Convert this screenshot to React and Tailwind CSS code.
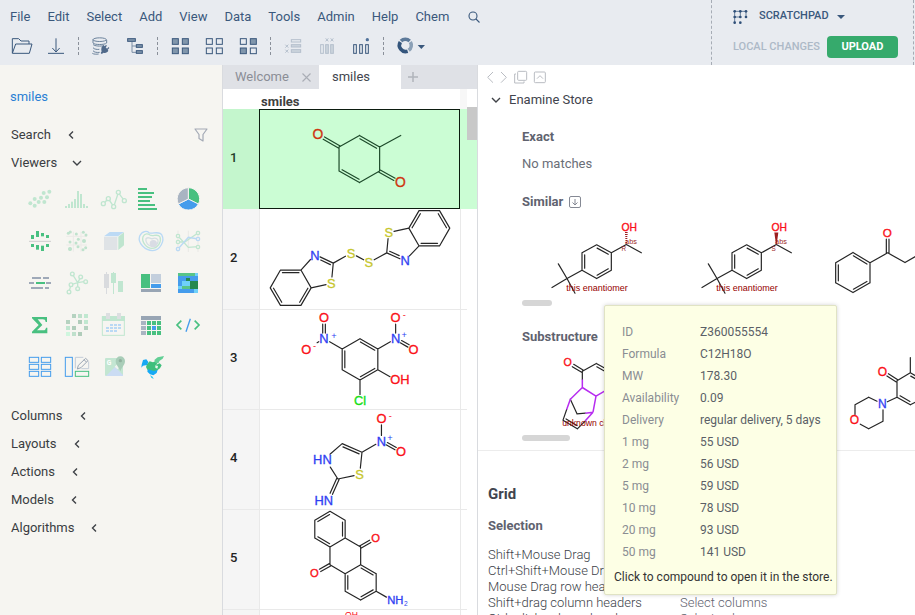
import React from "react";

const RED = "#fa1018";
const BLUE = "#2f40f2";
const YELLOW = "#c6c62c";
const GREEN = "#16e016";
const MAROON = "#9c1f1f";

/* Bond kinds: 1 single, 2 ring double (second line on the clockwise side), 3 centred double */
function bondPath([x1, y1, x2, y2, kind = 1]) {
  const len = Math.hypot(x2 - x1, y2 - y1);
  const ux = (x2 - x1) / len;
  const uy = (y2 - y1) / len;
  const seg = (off, trim) => {
    const ox = -uy * off;
    const oy = ux * off;
    return `M${x1 + ox + ux * trim} ${y1 + oy + uy * trim}L${x2 + ox - ux * trim} ${y2 + oy - uy * trim}`;
  };
  if (kind === 2) return seg(0, 0) + seg(8, 6);
  if (kind === 3) return seg(-4, 0) + seg(4, 0);
  return seg(0, 0);
}

function Molecule({ box, className, bonds, accent = [], labels = [], color = "#262626", size = 39, children }) {
  return (
    <svg viewBox={box} className={className} fontFamily="'Liberation Sans', Arial, sans-serif">
      <path d={bonds.map(bondPath).join("")} stroke={color} strokeWidth="3.6" fill="none" strokeLinecap="round" />
      {accent.length > 0 && (
        <path d={accent.map(bondPath).join("")} stroke="#b72df0" strokeWidth="4.5" fill="none" />
      )}
      {labels.map(([x, y, text, fill, fs = size], i) => (
        <text key={i} x={x} y={y + fs * 0.36} fontSize={fs} fill={fill} textAnchor="middle" stroke={fill} strokeWidth={fs > 28 ? 1 : 0}>
          {text}
        </text>
      ))}
      {children}
    </svg>
  );
}

const rows = [
  {
    box: "111 58 600 300",
    color: "#1d4a2a",
    bonds: [
      [411, 135, 472, 170, 2], [472, 170, 472, 243], [472, 243, 411, 278], [411, 278, 349, 243, 2],
      [349, 243, 349, 170], [349, 170, 411, 135], [349, 170, 303, 143, 3], [472, 243, 517, 268, 3], [472, 170, 536, 135],
    ],
    labels: [[285, 132, "O", "#cf3510", 42], [535, 276, "O", "#cf3510", 42]],
  },
  {
    box: "111 358 600 300",
    bonds: [
      [170, 543, 232, 543, 2], [232, 543, 263, 597], [263, 597, 232, 650, 2], [232, 650, 170, 650],
      [170, 650, 139, 597, 2], [139, 597, 170, 543], [232, 543, 261, 511], [290, 503, 330, 522, 2],
      [330, 522, 326, 564], [308, 587, 263, 597], [330, 522, 367, 501], [400, 500, 422, 512],
      [454, 512, 492, 491], [492, 491, 496, 448], [514, 426, 559, 416], [559, 416, 590, 470],
      [590, 470, 561, 500], [532, 509, 492, 491, 2], [590, 363, 652, 363], [652, 363, 683, 416, 2],
      [683, 416, 652, 470], [652, 470, 590, 470, 2], [559, 416, 590, 363, 2],
    ],
    labels: [
      [274, 497, "N", BLUE], [324, 583, "S", YELLOW], [384, 491, "S", YELLOW], [438, 521, "S", YELLOW],
      [498, 429, "S", YELLOW], [548, 515, "N", BLUE],
    ],
  },
  {
    box: "111 12 600 300",
    bonds: [
      [411, 99, 465, 130, 2], [465, 130, 465, 193], [465, 193, 411, 224, 2], [411, 224, 357, 193],
      [357, 193, 357, 130, 2], [357, 130, 411, 99], [357, 130, 319, 108], [302, 82, 302, 55, 3],
      [286, 108, 281, 111], [465, 130, 503, 108], [519, 82, 519, 55], [535, 108, 558, 121, 3],
      [465, 193, 502, 214], [411, 224, 411, 268],
    ],
    labels: [
      [302, 35, "O", RED], [302, 98, "N", BLUE], [248, 130, "O", RED], [519, 98, "N", BLUE], [519, 35, "O", RED],
      [573, 130, "O", RED], [532, 223, "OH", RED], [411, 286, "Cl", GREEN], [332, 89, "+", BLUE, 28],
      [545, 87, "+", BLUE, 28], [273, 121, "-", RED, 28], [545, 27, "-", RED, 28],
    ],
  },
  {
    box: "111 312 600 300",
    bonds: [
      [320, 446, 357, 414], [357, 414, 417, 440, 2], [417, 440, 412, 488], [393, 511, 344, 521],
      [344, 521, 321, 485], [344, 521, 324, 566, 3], [417, 440, 459, 416], [476, 389, 476, 357], [492, 414, 519, 429, 3],
    ],
    labels: [
      [297, 463, "HN", BLUE], [410, 507, "S", YELLOW], [301, 585, "HN", BLUE], [476, 406, "N", BLUE],
      [476, 336, "O", RED], [535, 438, "O", RED], [502, 395, "+", BLUE, 28], [503, 330, "-", RED, 28],
    ],
  },
  {
    box: "111 27 600 300",
    size: 34,
    bonds: [
      [320, 31, 366, 58], [366, 58, 366, 112, 2], [366, 112, 320, 139], [320, 139, 274, 112, 2], [274, 112, 274, 58],
      [274, 58, 320, 31, 2], [366, 112, 413, 139], [413, 139, 413, 193], [413, 193, 366, 220], [366, 220, 320, 193],
      [320, 193, 320, 139], [413, 193, 460, 220, 2], [460, 220, 460, 273], [460, 273, 413, 300, 2],
      [413, 300, 366, 273], [366, 273, 366, 220, 2], [413, 139, 442, 122, 3], [320, 193, 290, 210, 3], [460, 273, 491, 291],
    ],
    labels: [[458, 111, "O", RED], [273, 219, "O", RED], [518, 300, "NH", BLUE], [550, 310, "2", BLUE, 20]],
  },
  { box: "111 327 600 300", bonds: [[385, 356, 385, 380]], labels: [[385, 341, "OH", RED, 26]] },
];

const enantiomerBonds = [
  [245, 105, 289, 129, 2], [289, 129, 289, 181], [289, 181, 245, 206, 2], [245, 206, 201, 181],
  [201, 181, 201, 129, 2], [201, 129, 245, 105], [201, 181, 156, 206], [156, 206, 130, 162],
  [156, 206, 111, 233], [156, 206, 180, 250], [289, 129, 334, 104], [334, 104, 379, 129],
];

function Enantiomer({ letter, children }) {
  return (
    <Molecule
      box="21 31 450 230"
      className="h-[77px] w-[150px] shrink-0"
      bonds={enantiomerBonds}
      labels={[[343, 53, "OH", RED, 31], [348, 95, "abs", MAROON, 22], [326, 116, letter, MAROON, 19], [246, 234, "this enantiomer", "#960000", 27]]}
    >
      {children}
    </Molecule>
  );
}

/* ---------- toolbar ---------- */
const INK = "#3a587c";
const FADE = "#b4bfcc";

function Tool({ label, x, children, wide }) {
  return (
    <button type="button" aria-label={label} className={"flex h-[28px] items-center justify-center " + (wide ? "w-[40px]" : "w-[34px]")}>
      <svg viewBox={`${x} 105 ${wide ? 96 : 66} 66`} className={"h-[22px] " + (wide ? "w-[32px]" : "w-[22px]")} fill="none" stroke={INK} strokeWidth="3">
        {children}
      </svg>
    </button>
  );
}

function Sep() {
  return (
    <div className="flex h-[18px] w-[11px] justify-center">
      <div className="w-px border-l border-dashed border-[#8a909a]" />
    </div>
  );
}

function Quad({ x, filled }) {
  return [[0, 0], [30, 0], [0, 28], [30, 28]].map(([dx, dy], i) => (
    <rect key={i} x={x + dx} y={116 + dy} width="18" height="17" fill={filled[i] ? "#8096ac" : "none"} />
  ));
}

const menu = ["File", "Edit", "Select", "Add", "View", "Data", "Tools", "Admin", "Help", "Chem"];

function Header() {
  return (
    <header className="flex h-[65px] shrink-0 bg-[#e8ebf0] text-[#3a587c]">
      <div className="min-w-0 flex-1">
        <nav className="flex h-[33px] items-center gap-[17px] pl-[10px] text-[13px]">
          {menu.map((m) => (
            <button type="button" key={m}>{m}</button>
          ))}
          <button type="button" aria-label="Search" className="ml-[2px]">
            <svg viewBox="0 0 12 12" className="size-[12px]" fill="none" stroke={INK} strokeWidth="1.1">
              <circle cx="5" cy="5" r="4" />
              <path d="M8 8l3.5 3.5" />
            </svg>
          </button>
        </nav>
        <div className="flex h-[26px] items-center pl-[5px]">
          <Tool label="Open" x={33}>
            <path d="M37 159V116h19l7 7h24v9M37 160l10-28h49l-8 28z" />
          </Tool>
          <Tool label="Download" x={135}>
            <path d="M168 115v40M157 144l11 12 11-12M144 160h48" />
          </Tool>
          <Sep />
          <Tool label="Database" x={270}>
            <ellipse cx="299" cy="119" rx="20" ry="5.5" stroke="#6c839c" />
            <path d="M279 119v10c3 6 36 6 41 0v-9M279 133c4 6 24 6 32 4M279 143c3 5 14 6 19 5M279 152c3 5 12 6 20 5M277 160c5 3 12 3 19 2" stroke="#6c839c" />
            <path d="M305 141l6-6 3 4 4-4 3 2-4 5 4 4 5-5 2 3-5 5 2 3c-3 5-8 8-14 6l-6 4-3-3 3-5c-2-4-1-8 0-13z" fill="#50698a" stroke="none" />
          </Tool>
          <Tool label="Tree" x={372}>
            <path d="M396 125v32h12M396 138h12" stroke="#7c8fa5" />
            <rect x="383" y="116" width="23" height="8" fill="#8096ac" />
            <rect x="409" y="134" width="18" height="8" fill="#8096ac" />
            <rect x="409" y="152" width="18" height="8" fill="#8096ac" />
          </Tool>
          <Sep />
          <Tool label="Select all" x={507}><Quad x={517} filled={[1, 1, 1, 1]} /></Tool>
          <Tool label="Select none" x={609}><Quad x={619} filled={[0, 0, 0, 0]} /></Tool>
          <Tool label="Invert selection" x={711}><Quad x={721} filled={[0, 1, 1, 0]} /></Tool>
          <Sep />
          <Tool label="Remove rows" x={171}>
            <g stroke={FADE}>
              <rect x="199" y="119" width="28" height="7" />
              <rect x="199" y="134" width="28" height="7" fill="#ccd4dd" />
              <rect x="199" y="149" width="28" height="8" fill="#ccd4dd" />
              <path d="M181 134l9 9m0-9l-9 9M181 149l9 9m0-9l-9 9" />
            </g>
          </Tool>
          <Tool label="Remove columns" x={273}>
            <g stroke={FADE}>
              <rect x="287" y="134" width="8" height="26" />
              <rect x="302" y="134" width="8" height="26" fill="#ccd4dd" />
              <rect x="317" y="134" width="8" height="26" fill="#ccd4dd" />
              <path d="M302 115l8 9m0-9l-8 9M317 115l8 9m0-9l-8 9" />
            </g>
          </Tool>
          <Tool label="Add column" x={375}>
            <rect x="386" y="134" width="8" height="26" />
            <rect x="404" y="134" width="8" height="26" />
            <rect x="422" y="134" width="8" height="26" />
            <circle cx="427" cy="119" r="5" fill="#50729a" stroke="none" />
          </Tool>
          <Sep />
          <Tool label="Progress" x={506} wide>
            <path d="M530 123a19 19 0 0 1 26 0" stroke="#5d7a9a" strokeWidth="11" />
            <path d="M558 126a19 19 0 0 1-5 25" stroke="#8ba0b6" strokeWidth="11" />
            <path d="M550 154a19 19 0 0 1-22-28" stroke="#34557c" strokeWidth="11" />
            <path d="M580 135h22l-11 12z" fill={INK} stroke="none" />
          </Tool>
        </div>
      </div>
      <div className="mr-px w-[203px] shrink-0 border-x border-dashed border-[#a6acb5] pl-[21px]">
        <div className="flex h-[33px] items-center">
          <svg viewBox="371 27 45 45" className="size-[15px]" stroke="#4a6889" strokeWidth="2.5" fill="#2f4f78">
            <path d="M376 34v34M393 34v17M410 34v17M376 34h34M376 51h17" fill="none" />
            {[[376, 34], [393, 34], [410, 34], [376, 51], [393, 51], [410, 51], [376, 68], [393, 68]].map(([x, y]) => (
              <circle key={x + "-" + y} cx={x} cy={y} r="4" stroke="none" />
            ))}
          </svg>
          <button type="button" className="ml-[11px] flex items-center gap-[8px] text-[11px] font-medium">
            SCRATCHPAD
            <svg viewBox="0 0 8 4" className="h-[4px] w-[8px]" fill={INK}><path d="M0 0h8L4 4z" /></svg>
          </button>
        </div>
        <div className="flex items-center gap-[7px] pt-[3px]">
          <span className="text-[11px] font-medium text-[#adb9c7]">LOCAL CHANGES</span>
          <button type="button" className="h-[22px] w-[71px] rounded-[4px] bg-[#36aa6c] text-[11px] font-bold text-white">UPLOAD</button>
        </div>
      </div>
    </header>
  );
}

/* ---------- sidebar ---------- */
const G = "#48c080";
const LG = "#c0e6d0";
const GR = "#a9b4c2";
const BL = "#449cec";

const dots = (list, r, props) => list.map(([x, y], i) => <circle key={i} cx={x} cy={y} r={r} {...props} />);
const boxes = (list, fill) => list.map(([x, y, w, h, f], i) => <rect key={i} x={x} y={y} width={w} height={h} fill={f || fill} />);

const viewers = [
  ["Scatter plot", "84 231", dots([[91, 280], [104, 267], [104, 287], [116, 276], [123, 263], [131, 249], [133, 276], [141, 262], [148, 245]], 6, { fill: LG })],
  ["Histogram", "195 231", boxes([[195, 288, 6, 6], [204, 282, 6, 12], [213, 275, 6, 19], [222, 267, 6, 27], [231, 243, 6, 51], [240, 252, 6, 42], [249, 282, 6, 12], [258, 288, 6, 6]], LG)],
  ["Line chart", "306 231", <g key="l" fill="#f6f5f1" stroke={LG} strokeWidth="4"><path d="M310 281l15-15 16 24 14-42 18 24" fill="none" />{dots([[310, 281], [325, 266], [341, 290], [355, 247], [373, 272]], 6, {})}</g>],
  ["Bar chart", "417 231", boxes([[414, 234, 27, 6], [414, 246, 48, 6], [414, 258, 42, 6], [414, 270, 36, 6], [414, 282, 51, 6], [414, 294, 57, 6]], G)],
  ["Pie chart", "528 231", <g key="p" stroke="#f6f5f1" strokeWidth="3"><path d="M565 267V233a34 34 0 0 1 30 50z" fill={G} /><path d="M565 267l30 15a34 34 0 0 1-60 0z" fill={BL} /><path d="M565 267l-30 15a34 34 0 0 1 30-49z" fill={GR} /></g>],
  ["Trellis plot", "84 357", <g key="t">{boxes([[93, 375, 9, 12], [108, 363, 9, 18], [123, 369, 9, 10], [138, 375, 9, 9], [93, 402, 9, 9], [108, 405, 9, 14], [123, 407, 9, 16], [138, 402, 9, 9]], G)}<path d="M87 394h66" stroke="#cdcdcd" strokeWidth="3" /></g>],
  ["Matrix plot", "195 357", <g key="m"><path d="M199 379h62M199 405h62M220 365v60M243 365v60" stroke="#ebeae7" strokeWidth="3" />{dots([[205, 370], [211, 366], [229, 372], [250, 367], [258, 375], [210, 396], [235, 388], [228, 399], [210, 417], [234, 410], [257, 413], [249, 419]], 4.5, { fill: "#bfe2cd" })}{dots([[252, 393], [210, 417]], 6, { fill: "#bfe2cd" })}</g>],
  ["3D scatter plot", "306 357", <g key="c"><path d="M312 379l17-13h43l-18 13z" fill="#bcdaf5" /><path d="M355 380l17-13v39l-17 14z" fill="#bfe5cf" /><rect x="312" y="381" width="40" height="39" fill="#dfe3e6" /></g>],
  ["Density plot", "417 357", <g key="d" fill="none" strokeWidth="4"><path d="M419 378c8-16 22-16 28-10 8 6 32-8 39 8 8 16-4 44-28 46-22 0-46-22-39-44z" stroke="#b9d9f5" /><path d="M429 380c5-12 16-9 21-5 8 6 24-6 30 6 5 14-6 34-24 34-16 0-32-18-27-35z" stroke="#c0e6d0" /><path d="M438 386c8-8 12 2 20 0 8-4 18 0 16 10-3 10-10 13-17 13-12 0-22-12-19-23z" stroke="#d5dfe3" /><circle cx="460" cy="401" r="11" fill="#d9dce4" /></g>],
  ["PC plot", "528 357", <g key="pc" strokeWidth="4" fill="#f6f5f1"><path d="M534 362v64M565 362v64M594 362v64" stroke="#e9e8e5" strokeWidth="3" /><path d="M534 378l31 34 29-2M534 396h20l40-27" stroke={LG} fill="none" /><path d="M534 417l31-35 29 5" stroke="#bad9f4" fill="none" />{dots([[534, 378], [534, 396], [594, 369], [594, 411]], 5, { stroke: LG })}{dots([[534, 417], [594, 387]], 5, { stroke: "#bad9f4" })}</g>],
  ["Statistics", "84 33", boxes([[96, 51, 27, 6], [129, 51, 18, 6], [87, 66, 15, 6], [108, 66, 27, 6, G], [138, 66, 15, 6], [93, 81, 36, 6], [135, 81, 12, 6]], "#9fa9b8")],
  ["Network diagram", "195 33", <g key="n" stroke={LG} strokeWidth="4" fill="#f6f5f1"><path d="M233 68l-16-26M233 68l9-16M233 68l24-4M233 68v18M233 68l-20 6-6 22" fill="none" />{dots([[217, 42], [242, 51], [257, 65], [233, 86], [213, 74], [207, 96]], 5.5, {})}</g>],
  ["Box plot", "306 33", <g key="b">{boxes([[318, 36, 3, 66], [312, 42, 15, 42]], "#d9dbde")}{boxes([[339, 36, 3, 66], [333, 39, 15, 30], [354, 63, 15, 33]], LG)}</g>],
  ["Tree map", "417 33", boxes([[423, 42, 27, 42, G], [453, 42, 30, 27, "#c3cfdd"], [453, 72, 30, 12, BL], [423, 87, 60, 9, "#98a5b4"]])],
  ["Heat map", "528 33", boxes([[534, 39, 60, 60, BL], [534, 39, 51, 9, "#58c488"], [585, 39, 9, 9, "#6fd0f8"], [558, 54, 12, 9, "#24894f"], [546, 63, 24, 15, "#6fd0f8"], [570, 63, 24, 24, "#24894f"], [546, 78, 24, 9, "#58c488"], [534, 78, 12, 9, "#6fd0f8"], [582, 87, 12, 12, "#6fd0f8"]])],
  ["Statistics sum", "84 159", <path key="s" d="M96 171h45v15h-4c-1-6-3-8-9-8h-15l14 17-16 16h19c5 0 7-3 8-8h4v17H96v-5l20-20-20-20z" fill={G} />],
  ["Correlation plot", "195 159", boxes([[216, 162, 12, 12, "#b5d2c0"], [234, 162, 12, 12, "#bfe0cc"], [252, 162, 12, 12, "#c0e8d0"], [198, 180, 12, 12, "#b5d2c0"], [234, 180, 12, 12, "#b0ccba"], [252, 180, 12, 12, "#c0e8d0"], [198, 198, 12, 12], [216, 198, 12, 12, "#b0ccba"], [252, 198, 12, 12, "#b5d2c0"], [198, 216, 12, 12, "#cff6de"], [216, 216, 12, 12, "#bfe0cc"], [234, 216, 12, 12, "#b0ccba"]], LG)],
  ["Calendar", "306 159", <g key="cal"><rect x="307" y="170" width="66" height="56" fill="none" stroke={LG} strokeWidth="3" /><rect x="306" y="168" width="69" height="15" fill={LG} />{boxes([[318, 159, 12, 18, "#dcdfe1"], [351, 159, 12, 18, "#dcdfe1"], [330, 192, 9, 6], [342, 192, 9, 6], [354, 192, 9, 6], [318, 201, 9, 6], [330, 201, 9, 6], [342, 201, 9, 6], [354, 201, 9, 6], [318, 210, 9, 6], [330, 210, 9, 6], [342, 210, 9, 6]], "#bad9f4")}</g>],
  ["Pivot table", "417 159", boxes([[423, 168, 60, 12, "#98a5b4"], [423, 183, 15, 12], [423, 198, 15, 12], [423, 213, 15, 12], [441, 183, 12, 12, G], [456, 183, 12, 12, G], [471, 183, 12, 12, G], [441, 198, 12, 12, G], [456, 198, 12, 12, BL], [471, 198, 12, 12, G], [441, 213, 12, 12, G], [456, 213, 12, 12, G], [471, 213, 12, 12, G]], GR)],
  ["Markup", "528 159", <g key="mk" fill="none" strokeWidth="5"><path d="M544 182l-13 13 13 13M584 182l13 13-13 13" stroke={G} /><path d="M571 176l-13 39" stroke={BL} strokeWidth="4" /></g>],
  ["Tile viewer", "84 285", <g key="tv" fill="none" stroke={BL} strokeWidth="3">{[292, 313, 334].map((y) => [88, 124].map((x) => <rect key={x + "-" + y} x={x} y={y} width="28" height="15" />))}</g>],
  ["Form", "195 285", <g key="f" fill="none" strokeWidth="3"><rect x="196" y="292" width="21" height="57" stroke={BL} /><rect x="226" y="334" width="40" height="15" stroke={G} /><path d="M250 292h-24v33M266 304v22h-22" stroke="#c3ccd8" /><path d="M232 327l3-11 22-21 7 7-21 21zM252 299l7 7" stroke="#9aa5b4" /></g>],
  ["Google map", "306 285", <g key="gm"><rect x="315" y="294" width="54" height="54" rx="3" fill="#c3e6d2" /><path d="M318 348l27-27 24 24v3z" fill="#cbdcf3" /><path d="M344 320l8-8 8 10-8 6z" fill="#f0f3f0" /><path d="M361 334c-3-12-14-18-14-31a14 14 0 0 1 28 0c0 13-11 19-14 31z" fill="#a9cdb8" /><circle cx="361" cy="302" r="5" fill="#8fb09d" /><text x="320" y="314" fontSize="20" fontWeight="700" fill="#fff">G</text></g>],
  ["Globe", "417 285", <g key="gl"><path d="M441 312l8-8 10 3 8-4 6 4-4 7 10-4 6 6-5 9-8 6-6 4-22-2-6-12z" fill="#3fbf7c" /><path d="M463 300l10-8 19-4-4 8-9 6-4 8-9-2z" fill="#62cf95" /><path d="M444 328l18 5 11-4-3 10-10 7-10-3-8-8z" fill="#16a9f5" /><path d="M429 300l10-2 6 8-4 9-12 2-5 6 1-9z" fill="#16a9f5" /><path d="M450 345l8 5 3 7-7-4z" fill="#30c8f0" /><path d="M466 316l8 2-2 8-6-3z" fill="#eaf7ee" /></g>],
];

function Chevron({ open }) {
  return (
    <svg viewBox="0 0 10 10" className="size-[10px]" fill="none" stroke="#3f4247" strokeWidth="1.4">
      <path d={open ? "M1 3l4 4 4-4" : "M7 1.500L3.500 5l3.500 3.500"} />
    </svg>
  );
}

function Section({ name, open, children }) {
  return (
    <div className="flex h-[28px] items-center justify-between pr-[14px] pl-[11px]">
      <button type="button" className="flex items-center gap-[15px] text-[13px] text-[#3a3d42]">
        {name}
        <Chevron open={open} />
      </button>
      {children}
    </div>
  );
}

function Sidebar() {
  return (
    <aside className="w-[222px] shrink-0 bg-[#f6f5f1]">
      <div className="flex h-[56px] items-center pt-[8px] pl-[10px]">
        <a href="#smiles" className="text-[13px] text-[#2a7fd4]">smiles</a>
      </div>
      <Section name="Search">
        <button type="button" aria-label="Filter">
          <svg viewBox="0 0 14 14" className="size-[14px]" fill="none" stroke="#a3a9b5" strokeWidth="1.2">
            <path d="M1 1h12L9 6.500V13l-4-2.500V6.500z" strokeLinejoin="round" />
          </svg>
        </button>
      </Section>
      <Section name="Viewers" open />
      <div className="mt-px grid grid-cols-[repeat(5,37px)] pl-[21px]">
        {viewers.map(([name, origin, art]) => (
          <button type="button" key={name} aria-label={name} className="flex h-[42px] items-center justify-center">
            <svg viewBox={origin + " 72 72"} className="size-[24px] overflow-visible">{art}</svg>
          </button>
        ))}
      </div>
      <div className="mt-[14px]">
        {["Columns", "Layouts", "Actions", "Models", "Algorithms"].map((n) => (
          <Section key={n} name={n} />
        ))}
      </div>
    </aside>
  );
}

/* ---------- grid ---------- */
function GridView() {
  return (
    <section className="flex w-[256px] shrink-0 flex-col border-x border-[#d9dbdf] bg-white">
      <div className="flex h-[24px] shrink-0 bg-[#dfe1e6] text-[13px]">
        <button type="button" className="flex w-[96px] items-center justify-between pr-[8px] pl-[12px] text-[#8b8e96]">
          Welcome
          <svg viewBox="0 0 9 9" className="size-[9px]" stroke="#a9adb5" strokeWidth="1.100"><path d="M.5.5l8 8m0-8l-8 8" /></svg>
        </button>
        <button type="button" className="w-[82px] bg-white pl-[13px] text-left text-[#41444e]">smiles</button>
        <button type="button" aria-label="New tab" className="pl-[7px]">
          <svg viewBox="0 0 10 10" className="size-[10px]" stroke="#b1b4bb" strokeWidth="1.500"><path d="M5 0v10M0 5h10" /></svg>
        </button>
      </div>
      <div className="flex min-h-0 flex-1 overflow-hidden">
        <table className="w-[244px] shrink-0 table-fixed border-collapse self-start">
          <colgroup>
            <col className="w-[36px]" />
            <col className="w-[201px]" />
            <col className="w-[7px]" />
          </colgroup>
          <thead>
            <tr className="h-[20px]">
              <td />
              <th scope="col" className="p-0 pt-[4px] pl-[2px] text-left align-bottom text-[13px] leading-[15px] font-bold text-[#404040]">smiles</th>
              <td className="bg-[#f7f7f7]" />
            </tr>
          </thead>
          <tbody>
            {rows.map((r, i) => (
              <tr key={i} className={i === 0 ? "bg-[#cbfdd4]" : "border-b border-[#e9e9e9]"}>
                <th scope="row" className={"h-[100px] p-0 pb-[2px] pl-[7px] text-left text-[13px] font-medium " + (i === 0 ? "bg-[#c4f6cd] text-[#24402a]" : "bg-[#f5f5f5] text-[#222]")}>
                  {i + 1}
                </th>
                <td className={"h-[100px] p-0 " + (i === 0 ? "outline-1 -outline-offset-1 outline-[#0c1c0f]" : "border-x border-[#e9e9e9]")}>
                  <Molecule className="h-[99px] w-full" {...r} />
                </td>
                <td />
              </tr>
            ))}
          </tbody>
        </table>
        <div className="w-[10px] shrink-0 pt-[18px]">
          <div className="h-[33px] bg-[#c8c8c8]" />
          <div className="h-[69px] bg-[#cbfdd4]" />
        </div>
      </div>
    </section>
  );
}

/* ---------- context panel ---------- */
function Heading({ children, icon }) {
  return (
    <h4 className="flex h-[20px] items-center gap-[6px] text-[13px] font-bold text-[#5f636f]">
      {children}
      {icon && (
        <svg viewBox="0 0 12 12" className="size-[12px]" fill="none" stroke="#858994" strokeWidth="1">
          <rect x=".5" y=".5" width="11" height="11" rx="1.500" />
          <path d="M6 3v6M3.500 6.500L6 9l2.500-2.500" />
        </svg>
      )}
    </h4>
  );
}

const details = [
  ["ID", "Z360055554"], ["Formula", "C12H18O"], ["MW", "178.30"], ["Availability", "0.09"],
  ["Delivery", "regular delivery, 5 days"], ["1 mg", "55 USD"], ["2 mg", "56 USD"], ["5 mg", "59 USD"],
  ["10 mg", "78 USD"], ["20 mg", "93 USD"], ["50 mg", "141 USD"],
];

function Tooltip() {
  return (
    <div role="tooltip" className="absolute top-[240px] left-[126px] w-[233px] rounded-[2px] border border-[#e0e3c4] bg-[#fdffe5] pt-[15px] pb-[8px] pl-[9px] shadow-[0_0_4px_rgba(0,0,0,0.18)]">
      <table className="ml-[8px] text-[12px] leading-[22px]">
        <tbody>
          {details.map(([k, v]) => (
            <tr key={k}>
              <th scope="row" className="w-[78px] p-0 text-left font-normal text-[#8a8d93]">{k}</th>
              <td className="p-0 whitespace-nowrap text-[#5b5f67]">{v}</td>
            </tr>
          ))}
        </tbody>
      </table>
      <p className="pt-[5px] text-[12px] leading-[18px] whitespace-nowrap text-[#333]">Click to compound to open it in the store.</p>
    </div>
  );
}

const shortcuts = [
  ["Shift+Mouse Drag", ""],
  ["Ctrl+Shift+Mouse Drag", ""],
  ["Mouse Drag row headers", ""],
  ["Shift+drag column headers", "Select columns"],
  ["Ctrl+click column headers", "Select columns"],
];

function ContextPanel() {
  return (
    <section className="relative min-w-0 flex-1 bg-white">
      <div className="overflow-hidden">
        <div className="flex h-[25px] items-center pl-[9px]">
          <svg viewBox="27 30 180 45" className="h-[15px] w-[60px]" fill="none" stroke="#b9bcc2" strokeWidth="3">
            <path d="M45 36L29 52l16 16M69 36l16 16-16 16" />
            <rect x="119" y="34" width="27" height="27" rx="3" />
            <path d="M114 42h-4v27h28v-5" />
            <rect x="169" y="36" width="33" height="32" rx="3" />
            <path d="M177 56l9-9 9 9" />
          </svg>
        </div>
        <h3 className="flex h-[20px] items-center gap-[8px] pl-[13px] text-[13px] text-[#41444e]">
          <Chevron open />
          Enamine Store
        </h3>
        <div className="pl-[44px]">
          <div className="pt-[17px]"><Heading>Exact</Heading></div>
          <p className="mt-[7px] h-[20px] text-[13px] leading-[20px] text-[#6a6e78]">No matches</p>
          <div className="pt-[18px]"><Heading icon>Similar</Heading></div>
          <div className="mt-[8px] flex overflow-hidden">
            <Enantiomer letter="R">
              <path d="M330 68h8M330 74h8M331 80h6M331 86h6M332 92h4M332 98h4" stroke={MAROON} strokeWidth="3" />
            </Enantiomer>
            <Enantiomer letter="S">
              <path d="M328 68h12l-5 36h-2z" fill={MAROON} />
            </Enantiomer>
            <Molecule
              box="921 31 450 230"
              className="h-[77px] w-[150px] shrink-0"
              bonds={[
                [1014, 128, 1065, 159, 2], [1065, 159, 1065, 219], [1065, 219, 1014, 248, 2], [1014, 248, 962, 219],
                [962, 219, 962, 159, 2], [962, 159, 1014, 128], [1065, 159, 1118, 129], [1118, 129, 1170, 158],
                [1170, 158, 1222, 128], [1118, 129, 1118, 88, 3],
              ]}
              labels={[[1117, 69, "O", RED, 35]]}
            />
          </div>
          <div className="mt-[3px] h-[6px] w-[30px] rounded-full bg-[#d6d6d6]" />
          <div className="pt-[21px]"><Heading icon>Substructure</Heading></div>
          <div className="mt-[8px] flex overflow-hidden">
            <Molecule
              box="132 165 450 230"
              className="h-[77px] w-[150px] shrink-0"
              bonds={[
                [285, 196, 313, 213, 3], [313, 213, 355, 190], [355, 190, 400, 215, 2], [313, 213, 313, 238], [277, 297, 297, 341],
                [297, 341, 322, 339], [266, 328, 255, 360], [298, 386, 255, 360, 2], [298, 386, 322, 362],
              ]}
              accent={[
                [313, 238, 313, 262], [313, 262, 277, 297], [313, 262, 354, 288], [354, 288, 395, 264],
                [354, 288, 345, 336], [345, 336, 322, 339], [277, 297, 266, 328], [345, 336, 322, 362],
              ]}
              labels={[[269, 187, "O", RED, 32], [352, 369, "unknown chirality", "#960000", 26]]}
            />
            <div className="w-[150px] shrink-0" />
            <Molecule
              box="1032 165 450 230"
              className="h-[77px] w-[150px] shrink-0"
              bonds={[
                [1229, 224, 1257, 242, 3], [1257, 242, 1297, 218], [1297, 218, 1340, 242, 2], [1297, 218, 1297, 172],
                [1257, 242, 1257, 291], [1297, 314, 1257, 291, 2], [1297, 314, 1340, 291], [1257, 291, 1228, 305],
                [1197, 303, 1172, 291], [1172, 291, 1131, 314], [1131, 314, 1131, 343], [1147, 372, 1172, 386],
                [1172, 386, 1215, 363], [1215, 363, 1215, 329],
              ]}
              labels={[[1213, 215, "O", RED, 36], [1213, 312, "N", BLUE, 36], [1129, 359, "O", RED, 36]]}
            />
          </div>
          <div className="mt-[3px] h-[6px] w-[48px] rounded-full bg-[#d6d6d6]" />
        </div>
        <div className="mt-[9px] border-t border-[#ececec] pt-[33px] pl-[10px]">
          <h2 className="text-[15px] leading-[20px] font-bold text-[#41444e]">Grid</h2>
          <h4 className="mt-[12px] text-[13px] leading-[20px] font-bold text-[#5f636f]">Selection</h4>
          <table className="mt-[11px] text-[13px] leading-[16px] font-light text-[#3c3f48]">
            <tbody>
              {shortcuts.map(([k, v]) => (
                <tr key={k}>
                  <td className="w-[192px] p-0 whitespace-nowrap">{k}</td>
                  <td className="p-0 whitespace-nowrap text-[#5f636f]">{v}</td>
                </tr>
              ))}
            </tbody>
          </table>
        </div>
      </div>
      <Tooltip />
    </section>
  );
}

export default function App() {
  return (
    <div className="flex h-screen flex-col overflow-hidden bg-white font-['Roboto',sans-serif]">
      <Header />
      <main className="flex min-h-0 flex-1 overflow-hidden">
        <Sidebar />
        <GridView />
        <ContextPanel />
      </main>
    </div>
  );
}
